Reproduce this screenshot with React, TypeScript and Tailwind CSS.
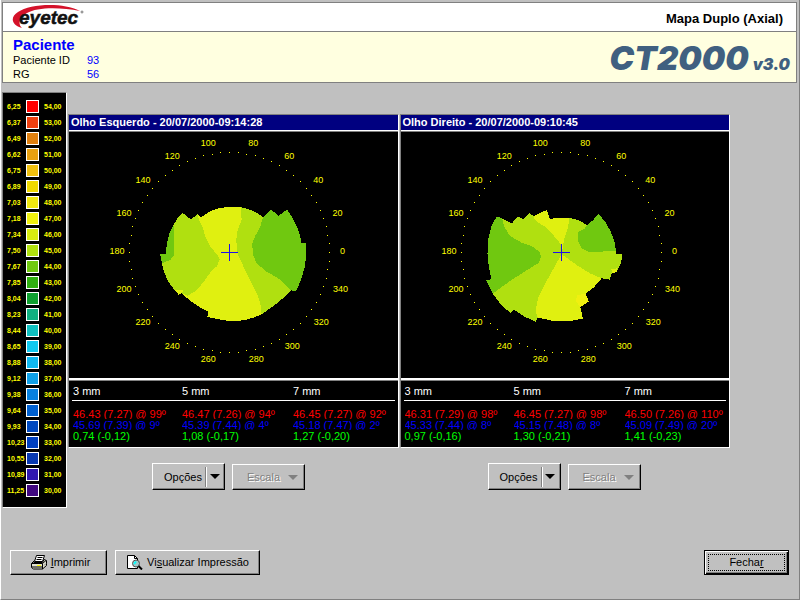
import React from "react";

type Region = { fill: string; points: string };

type Eye = {
  title: string;
  offset: number;
  regions: Region[];
  sim: string[];
  flat: string[];
  diff: string[];
  actions: string;
};

const YELLOW = "#e0f010";
const LIME = "#b0e010";
const GREEN = "#70c810";

const scale = [
  ["6,25", "54,00", "#ff0000"],
  ["6,37", "53,00", "#f04010"],
  ["6,49", "52,00", "#e08010"],
  ["6,62", "51,00", "#e8a010"],
  ["6,75", "50,00", "#f0c010"],
  ["6,89", "49,00", "#f0d800"],
  ["7,03", "48,00", "#f0e810"],
  ["7,18", "47,00", "#f0f010"],
  ["7,34", "46,00", "#d8ec10"],
  ["7,50", "45,00", "#b0e010"],
  ["7,67", "44,00", "#70c810"],
  ["7,85", "43,00", "#30b010"],
  ["8,04", "42,00", "#10a030"],
  ["8,23", "41,00", "#10b080"],
  ["8,44", "40,00", "#10c0c0"],
  ["8,65", "39,00", "#10c8f0"],
  ["8,88", "38,00", "#10b8f0"],
  ["9,12", "37,00", "#10a0e8"],
  ["9,38", "36,00", "#0880e0"],
  ["9,64", "35,00", "#0060d0"],
  ["9,93", "34,00", "#0048c0"],
  ["10,23", "33,00", "#0040c0"],
  ["10,55", "32,00", "#0838b0"],
  ["10,89", "31,00", "#3018b0"],
  ["11,25", "30,00", "#400880"],
];

// label, x, y inside the map
const degrees = [
  ["0", 273, 119],
  ["20", 268, 81],
  ["40", 249, 48],
  ["60", 220, 24],
  ["80", 184, 11],
  ["100", 139, 11],
  ["120", 103, 24],
  ["140", 74, 48],
  ["160", 55, 81],
  ["180", 48, 119],
  ["200", 55, 157],
  ["220", 74, 190],
  ["240", 103, 214],
  ["260", 139, 227],
  ["280", 187, 227],
  ["300", 223, 214],
  ["320", 252, 190],
  ["340", 271, 157],
] as const;

const eyes: Eye[] = [
  {
    title: "Olho Esquerdo - 20/07/2000-09:14:28",
    offset: 31,
    regions: [
      {
        fill: YELLOW,
        points:
          "248,309 272,328 292,312 303,321 330,303 360,293 388,291 422,291 450,299 470,309 488,321 484,612 460,622 430,630 400,633 370,630 345,625 321,620 325,604 300,592 270,572 245,549 235,553 222,538 260,430",
      },
      {
        fill: LIME,
        points:
          "248,309 272,328 292,312 297,330 308,352 315,380 330,410 350,432 358,448 350,468 330,487 310,515 290,540 262,557 245,549 250,540 222,538 205,515 192,487 185,458 180,430 197,430 200,400 208,370 220,345 235,320",
      },
      {
        fill: GREEN,
        points: "220,345 222,435 210,450 190,457 185,458 180,430 197,430 200,400 208,370",
      },
      {
        fill: LIME,
        points:
          "422,291 450,299 470,309 488,321 520,400 572,540 550,562 520,587 484,612 480,580 470,550 450,510 430,470 412,430 408,390 412,360 424,330",
      },
      {
        fill: GREEN,
        points:
          "488,321 512,297 534,318 560,298 575,321 588,345 598,372 603,398 617,398 617,440 613,470 605,500 595,525 586,543 572,540 540,508 500,485 470,460 458,435 456,400 466,375 480,350",
      },
    ],
    sim: ["46.43 (7.27) @ 99º", "46.47 (7.26) @ 94º", "46.45 (7.27) @ 92º"],
    flat: ["45.69 (7.39) @ 9º", "45.39 (7.44) @ 4º", "45.18 (7.47) @ 2º"],
    diff: ["0,74 (-0,12)", "1,08 (-0,17)", "1,27 (-0,20)"],
    actions: "pl-[84px]",
  },
  {
    title: "Olho Direito - 20/07/2000-09:10:45",
    offset: 29,
    regions: [
      {
        fill: LIME,
        points:
          "200,319 216,325 245,340 263,318 278,327 298,310 310,318 330,308 350,300 359,326 390,323 418,323 445,330 470,345 488,330 505,312 525,335 540,362 552,392 557,432 575,432 573,455 560,483 545,486 538,508 514,504 490,532 466,550 476,574 450,590 458,625 420,632 370,632 322,622 317,635 285,620 250,598 240,608 210,580 188,550 168,510 184,507 176,470 172,430 175,385 185,345",
      },
      {
        fill: GREEN,
        points:
          "200,319 216,325 222,350 240,378 275,398 305,408 328,425 333,440 325,458 290,480 240,512 215,530 188,550 168,510 184,507 176,470 172,430 175,385 185,345",
      },
      {
        fill: YELLOW,
        points:
          "310,318 330,308 350,300 359,326 390,323 418,323 412,355 402,385 396,420 390,400 365,370 345,350 325,338 310,324",
      },
      {
        fill: YELLOW,
        points:
          "394,432 440,465 480,490 514,504 490,532 466,550 476,574 450,590 458,625 420,632 370,632 322,622 316,600 325,560 345,520 370,475",
      },
      {
        fill: GREEN,
        points:
          "505,312 488,330 470,345 462,357 442,366 444,395 455,415 475,425 557,423 552,392 540,362 525,335",
      },
      { fill: "#f0f010", points: "440,555 466,550 476,574 450,590 437,572" },
      { fill: YELLOW, points: "543,478 560,474 560,486 545,488" },
    ],
    sim: ["46.31 (7.29) @ 98º", "46.45 (7.27) @ 98º", "46.50 (7.26) @ 110º"],
    flat: ["45.33 (7.44) @ 8º", "45.15 (7.48) @ 8º", "45.09 (7.49) @ 20º"],
    diff: ["0,97 (-0,16)", "1,30 (-0,21)", "1,41 (-0,23)"],
    actions: "pl-[88px]",
  },
];

const bevel =
  "border border-t-white border-l-white border-r-black border-b-black shadow-[inset_-1px_-1px_0_#808080]";

const Logo = () => (
  <svg viewBox="0 0 74 28" className="h-7 w-[74px]" role="img" aria-label="eyetec">
    <path
      d="M10 25 C-1 22 -2 14 6 9 C18 1 50 -1 68 8 C48 4 25 4 15 10 C8 14 5 20 10 25 Z"
      fill="#d4122a"
    />
    <text
      x="7"
      y="21"
      fontSize="19"
      fontWeight="bold"
      fontStyle="italic"
      fontFamily="Liberation Sans, sans-serif"
      fill="#111111"
      stroke="#111111"
      strokeWidth="0.5"
    >
      eyetec
    </text>
    <circle cx="70" cy="9" r="1" fill="none" stroke="#777777" />
  </svg>
);

const Legend = () => (
  <div className="flex w-[65px] shrink-0 flex-col gap-[3px] border border-t-[#808080] border-r-white border-b-white border-l-[#808080] bg-black pt-[7px] pb-[10px] text-[7px] leading-[13px] font-bold text-[#ffff00]">
    {scale.map(([mm, diopters, color]) => (
      <div key={mm} className="flex h-[13px] pl-1">
        <span className="w-[19px]">{mm}</span>
        <span
          className="size-[13px] border border-white"
          style={{ backgroundColor: color }}
        />
        <span className="pl-[5px]">{diopters}</span>
      </div>
    ))}
  </div>
);

const dots = Array.from({ length: 72 }, (_, i) => {
  const angle = (i * 5 * Math.PI) / 180;
  return {
    x: Math.round(160 + 100 * Math.cos(angle)),
    y: Math.round(120 - 100 * Math.sin(angle)),
  };
});

const EyeMap = ({ eye }: { eye: Eye }) => (
  <svg viewBox="0 0 328 246" className="block w-full" shapeRendering="crispEdges">
    {dots.map((dot, i) => (
      <rect key={i} x={dot.x} y={dot.y} width="1" height="1" fill="#ffff00" />
    ))}
    <g transform={`translate(${eye.offset} -22) scale(0.33333)`}>
      {eye.regions.map((region, i) => (
        <polygon key={i} points={region.points} fill={region.fill} />
      ))}
    </g>
    <path d="M152 120.5H169M160.5 112V129" stroke="#2010e8" fill="none" />
    <g fontSize="9" fill="#ffff00" textAnchor="middle">
      {degrees.map(([label, x, y]) => (
        <text key={label} x={x} y={y + 3}>
          {label}
        </text>
      ))}
    </g>
  </svg>
);

const Readings = ({ eye }: { eye: Eye }) => (
  <div className="h-[66px] bg-black px-[3px] text-[11px]">
    <table className="w-full table-fixed border-collapse text-left whitespace-nowrap">
      <thead>
        <tr className="h-[19px] border-b border-white leading-[18px] text-white">
          <th className="w-[109px] p-0 pl-px font-normal">3 mm</th>
          <th className="w-[111px] p-0 pl-px font-normal">5 mm</th>
          <th className="p-0 pl-px font-normal">7 mm</th>
        </tr>
      </thead>
      <tbody>
        <tr className="text-[#ff0000]">
          {eye.sim.map((value) => (
            <td key={value} className="p-0 pt-[7px] pl-px">
              <div className="h-[11px] overflow-hidden leading-[13px]">{value}</div>
            </td>
          ))}
        </tr>
        <tr className="text-[#0000ff]">
          {eye.flat.map((value) => (
            <td key={value} className="p-0 pl-px">
              <div className="h-[11px] overflow-hidden leading-[13px]">{value}</div>
            </td>
          ))}
        </tr>
        <tr className="text-[#00ff00]">
          {eye.diff.map((value) => (
            <td key={value} className="p-0 pl-px leading-[13px]">
              {value}
            </td>
          ))}
        </tr>
      </tbody>
    </table>
  </div>
);

const Arrow = () => (
  <svg viewBox="0 0 10 5" className="h-[5px] w-[10px]" fill="currentColor">
    <path d="M0 0H10L5 5Z" />
  </svg>
);

const EyePanel = ({ eye }: { eye: Eye }) => (
  <section className="min-w-0 flex-1">
    <div className="border border-t-[#808080] border-r-white border-b-white border-l-[#808080]">
      <h2 className="h-[15px] bg-[#000080] pl-[2px] text-[11px] leading-[15px] font-bold whitespace-nowrap text-white">
        {eye.title}
      </h2>
      <div className="border-y border-t-white border-b-[#808080]" />
      <div className="bg-black">
        <EyeMap eye={eye} />
      </div>
      <div className="border-t-2 border-b border-t-white border-b-[#808080]" />
      <Readings eye={eye} />
    </div>
    <div className={`flex gap-[7px] pt-[15px] text-[11px] ${eye.actions}`}>
      <button type="button" className={`flex h-[27px] w-[73px] items-center ${bevel}`}>
        <span className="flex-1 pl-2">Opções</span>
        <span className="flex h-5 w-[19px] items-center justify-center border-l border-[#808080] pr-px shadow-[inset_1px_0_0_white]">
          <Arrow />
        </span>
      </button>
      <button
        type="button"
        disabled
        className={`mt-px flex h-[26px] w-[73px] items-center justify-center gap-2 pl-2 text-[#808080] [text-shadow:1px_1px_0_white] ${bevel}`}
      >
        Escala
        <Arrow />
      </button>
    </div>
  </section>
);

const PrinterIcon = () => (
  <svg viewBox="0 0 16 15" className="h-[15px] w-4">
    <path d="M5.5 0.5H13.5L11.5 6.5H3.5Z" fill="white" stroke="black" />
    <path d="M6.5 2.5H11.5M5.5 4.5H10.5" stroke="black" />
    <path d="M3.5 5.5L0.5 8.5V12.5L2.5 14H11.5L15.5 10.5V5.5L13 4.5L11.5 7.5H2.5" fill="#e0e0d0" stroke="black" />
    <path d="M0.5 8.5H11.5L15 5.5M11.5 8.5V14M1 12H11" stroke="black" fill="none" />
    <path d="M6 10.5H10" stroke="#ffff00" />
    <path d="M13 10.5L15 8.5" stroke="#808080" />
  </svg>
);

const PreviewIcon = () => (
  <svg viewBox="0 0 17 15" className="h-[15px] w-[17px]">
    <path d="M1.5 0.5H8.5L11.5 3.5V13.5H1.5Z" fill="white" stroke="black" />
    <path d="M8.5 0.5V3.5H11.5" fill="none" stroke="black" />
    <circle cx="10" cy="8.5" r="3.5" fill="#a0c8c8" stroke="#505050" />
    <path d="M8 9L10 6.5" stroke="#00ffff" strokeWidth="2" />
    <path d="M12.5 11L16 14.5" stroke="black" strokeWidth="2" />
  </svg>
);

export default function App() {
  return (
    <div className="flex min-h-screen flex-col border-r border-b border-l border-r-[#808080] border-b-[#808080] border-l-white bg-[#c0c0c0] font-['Liberation_Sans',Arial,sans-serif] text-black">
      <header className="mt-[2px] mr-[2px] ml-px border border-[#808080]">
        <div className="flex h-[29px] items-center justify-between border-b border-[#808080] bg-white pr-[13px] pl-[9px]">
          <Logo />
          <h1 className="pt-1 text-[13px] font-bold">Mapa Duplo (Axial)</h1>
        </div>
        <div className="flex h-[50px] justify-between bg-[#ffffe0] pr-[6px] pl-[10px]">
          <div className="pt-1 text-[11px] leading-[14px]">
            <h2 className="text-[15px] leading-[17px] font-bold text-[#0000ff]">Paciente</h2>
            <dl className="grid grid-cols-[74px_auto]">
              <dt>Paciente ID</dt>
              <dd className="text-[#0000ff]">93</dd>
              <dt>RG</dt>
              <dd className="text-[#0000ff]">56</dd>
            </dl>
          </div>
          <div className="flex items-baseline gap-1 pt-[7px] font-[Inter,sans-serif] font-black text-[#406080] italic">
            <span className="text-[33px] leading-[38px]">CT2000</span>
            <span className="text-[16px]">v3.0</span>
          </div>
        </div>
      </header>

      <main className="flex flex-1 items-start pt-[9px] pl-px">
        <Legend />
        <div className="flex min-w-0 flex-1 gap-px pt-[22px] pr-[69px] pl-px">
          {eyes.map((eye) => (
            <EyePanel key={eye.title} eye={eye} />
          ))}
        </div>
      </main>

      <footer className="flex gap-2 pr-[10px] pb-6 pl-[9px] text-[11px]">
        <button
          type="button"
          className={`flex h-[25px] w-[97px] items-center justify-center gap-1 pl-1 ${bevel}`}
        >
          <PrinterIcon />
          <span>
            <u>I</u>mprimir
          </span>
        </button>
        <button
          type="button"
          className={`flex h-[25px] w-[145px] items-center justify-center gap-1 ${bevel}`}
        >
          <PreviewIcon />
          <span>
            Vi<u>s</u>ualizar Impressão
          </span>
        </button>
        <button
          type="button"
          className="ml-auto h-[25px] w-[85px] border border-black p-px shadow-[inset_1px_1px_0_white,inset_-1px_-1px_0_black,inset_-2px_-2px_0_#808080]"
        >
          <span className="m-[2px] flex h-[17px] items-center justify-center border border-dotted border-black">
            <span>
              Fecha<u>r</u>
            </span>
          </span>
        </button>
      </footer>
    </div>
  );
}
